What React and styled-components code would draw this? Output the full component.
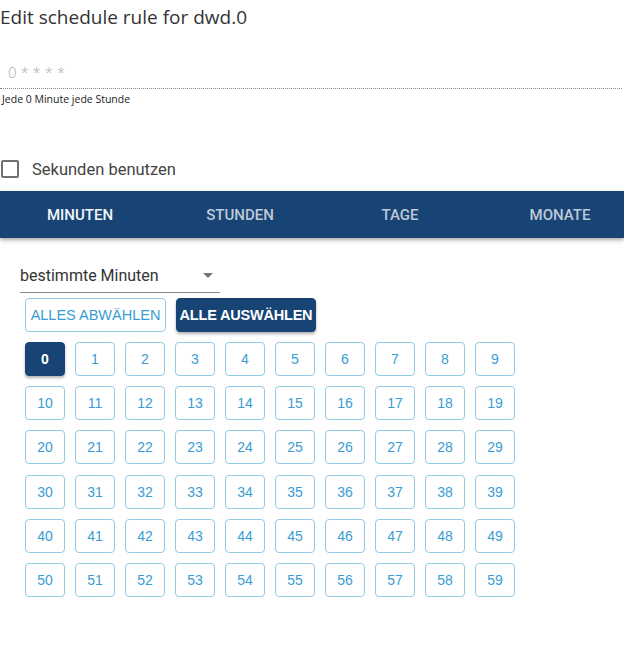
import React, { useState } from 'react';
import styled, { createGlobalStyle } from 'styled-components';

const GlobalStyle = createGlobalStyle`
  body {
    margin: 0;
    background: #fff;
    font-family: 'Liberation Sans', Arial, sans-serif;
  }
`;

const Page = styled.div`
  width: 624px;
  display: flex;
  flex-direction: column;
`;

const Title = styled.h2`
  margin: 0;
  font-family: 'Open Sans', 'Noto Sans', sans-serif;
  font-weight: 400;
  font-size: 19px;
  line-height: 34px;
  color: #333;
`;

const Field = styled.div`
  margin-top: 22px;
  display: flex;
  flex-direction: column;
`;

const CronInput = styled.div`
  height: 32px;
  line-height: 32px;
  font-family: 'Open Sans', 'Noto Sans', sans-serif;
  font-weight: 300;
  font-size: 15px;
  color: #aaa;
  padding-left: 8px;
  border-bottom: 1px dotted #888;
  margin-right: 2px;
`;

const Helper = styled.div`
  margin-top: 2px;
  font-family: 'Open Sans', 'Noto Sans', sans-serif;
  font-size: 10.5px;
  line-height: 16px;
  color: #222;
  padding-left: 2px;
`;

const CheckRow = styled.label`
  margin-top: 52px;
  display: flex;
  align-items: center;
  gap: 13px;
  height: 20px;
  padding-left: 1px;
  font-family: Roboto, 'Liberation Sans', sans-serif;
  font-size: 16.5px;
  color: #444;
`;

const Box = styled.span`
  width: 14px;
  height: 14px;
  border: 2px solid #707070;
  border-radius: 2px;
`;

const TabBar = styled.div`
  margin-top: 12px;
  height: 47px;
  background: #174475;
  display: grid;
  grid-template-columns: repeat(4, 160px);
  box-shadow: 0 2px 4px rgba(0, 0, 0, 0.35);
`;

const Tab = styled.div`
  display: flex;
  align-items: center;
  justify-content: center;
  font-family: Roboto, 'Liberation Sans', sans-serif;
  font-weight: 500;
  font-size: 15px;
  color: ${({ active }) => (active ? '#f2f5f8' : 'rgba(255, 255, 255, 0.72)')};
`;

const Content = styled.div`
  padding: 0 0 0 20px;
  display: flex;
  flex-direction: column;
`;

const Select = styled.div`
  margin-top: 24px;
  width: 200px;
  height: 31px;
  box-sizing: border-box;
  padding-bottom: 4px;
  border-bottom: 1px solid #888;
  display: flex;
  align-items: center;
  justify-content: space-between;
  font-family: Roboto, 'Liberation Sans', sans-serif;
  font-size: 16px;
  color: #333;
`;

const Caret = styled.span`
  width: 0;
  height: 0;
  border-left: 5px solid transparent;
  border-right: 5px solid transparent;
  border-top: 5px solid #757575;
  margin-right: 7px;
`;

const Actions = styled.div`
  margin-top: 5px;
  padding-left: 5px;
  display: flex;
  gap: 10px;
`;

const ActionButton = styled.button`
  height: 34px;
  width: ${({ w }) => w}px;
  padding: 0;
  white-space: nowrap;
  border-radius: 4px;
  font-family: 'Liberation Sans', Arial, sans-serif;
  font-size: 14.5px;
  font-weight: ${({ filled }) => (filled ? 700 : 400)};
  letter-spacing: ${({ filled }) => (filled ? '-0.2px' : '0')};
  cursor: pointer;
  border: 1px solid ${({ filled }) => (filled ? '#174475' : '#94cbe6')};
  background: ${({ filled }) => (filled ? '#174475' : '#fff')};
  color: ${({ filled }) => (filled ? '#fff' : '#3a9cd4')};
  box-shadow: ${({ filled }) => (filled ? '0 2px 3px rgba(0,0,0,0.3)' : 'none')};
`;

const Grid = styled.div`
  margin-top: 10px;
  padding-left: 5px;
  display: grid;
  grid-template-columns: repeat(10, 40px);
  column-gap: 10px;
  row-gap: 10.2px;
`;

const Cell = styled.button`
  height: 34px;
  padding: 0;
  border-radius: 4px;
  font-family: 'Liberation Sans', Arial, sans-serif;
  font-size: 14px;
  cursor: pointer;
  border: 1px solid ${({ selected }) => (selected ? '#174475' : '#94cbe6')};
  background: ${({ selected }) => (selected ? '#174475' : '#fff')};
  color: ${({ selected }) => (selected ? '#fff' : '#3a9cd4')};
  font-weight: ${({ selected }) => (selected ? 700 : 400)};
  box-shadow: ${({ selected }) => (selected ? '0 2px 3px rgba(0,0,0,0.3)' : 'none')};
`;

const tabs = ['MINUTEN', 'STUNDEN', 'TAGE', 'MONATE'];

const App = () => {
  const [selected, setSelected] = useState([0]);

  const toggle = (n) =>
    setSelected((s) => (s.includes(n) ? s.filter((x) => x !== n) : [...s, n]));

  return (
    <Page>
      <GlobalStyle />
      <Title>Edit schedule rule for dwd.0</Title>
      <Field>
        <CronInput>0 * * * *</CronInput>
        <Helper>Jede 0 Minute jede Stunde</Helper>
      </Field>
      <CheckRow>
        <Box />
        Sekunden benutzen
      </CheckRow>
      <TabBar>
        {tabs.map((t, i) => (
          <Tab key={t} active={i === 0}>
            {t}
          </Tab>
        ))}
      </TabBar>
      <Content>
        <Select>
          bestimmte Minuten
          <Caret />
        </Select>
        <Actions>
          <ActionButton w={141} onClick={() => setSelected([])}>
            ALLES ABWÄHLEN
          </ActionButton>
          <ActionButton
            w={140}
            filled
            onClick={() => setSelected([...Array(60).keys()])}
          >
            ALLE AUSWÄHLEN
          </ActionButton>
        </Actions>
        <Grid>
          {[...Array(60).keys()].map((n) => (
            <Cell key={n} selected={selected.includes(n)} onClick={() => toggle(n)}>
              {n}
            </Cell>
          ))}
        </Grid>
      </Content>
    </Page>
  );
};

export default App;
